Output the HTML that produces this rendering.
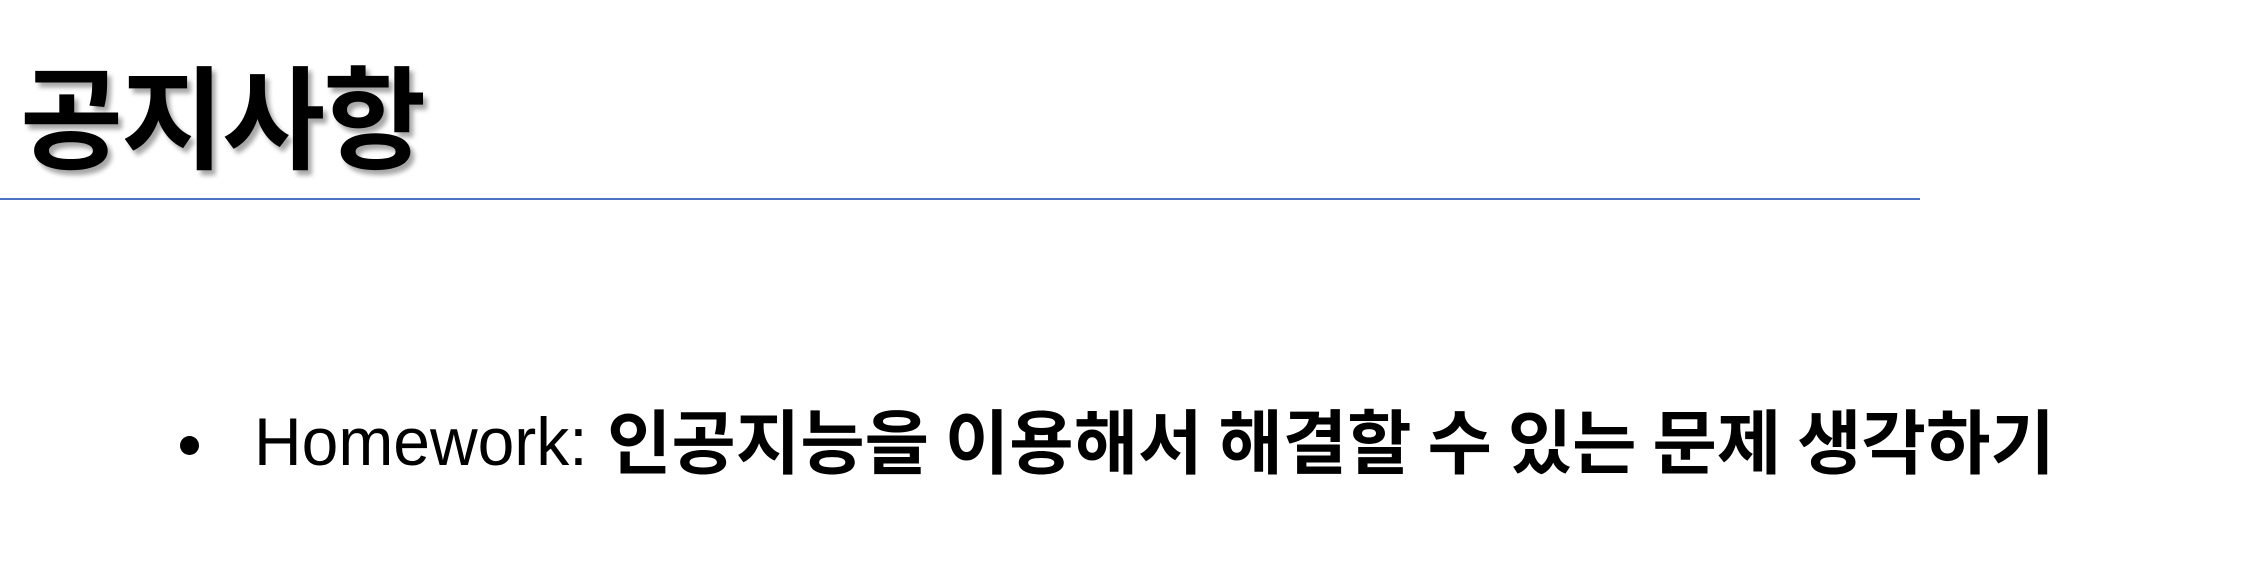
<!DOCTYPE html>
<html><head><meta charset="utf-8"><style>
html,body{margin:0;padding:0;background:#fff;width:2266px;height:582px;overflow:hidden;position:relative}
.t{position:absolute;left:20px;top:66px;font-family:"Liberation Sans","Noto Sans CJK KR",sans-serif;font-weight:bold;font-size:112px;line-height:1;color:#000;text-shadow:4px 5px 5px rgba(0,0,0,0.35);letter-spacing:-2px}
.line{position:absolute;left:0;top:198px;width:1920px;height:2px;background:#4a72c0}
.b{position:absolute;left:180px;top:436px;width:19px;height:19px;border-radius:50%;background:#000}
.hw{position:absolute;left:254px;top:408px;font-family:"Liberation Sans",sans-serif;font-size:68px;line-height:1;color:#000;transform:scaleX(0.97);transform-origin:0 0;white-space:nowrap}
.kr{position:absolute;left:607px;top:404px;font-family:"Noto Sans CJK KR",sans-serif;font-weight:bold;font-size:70px;line-height:1;color:#000;white-space:nowrap;word-spacing:0px}
</style></head><body>
<div class="t">공지사항</div>
<div class="line"></div>
<div class="b"></div>
<div class="hw">Homework:</div>
<div class="kr">인공지능을 이용해서 해결할 수 있는 문제 생각하기</div>
</body></html>
